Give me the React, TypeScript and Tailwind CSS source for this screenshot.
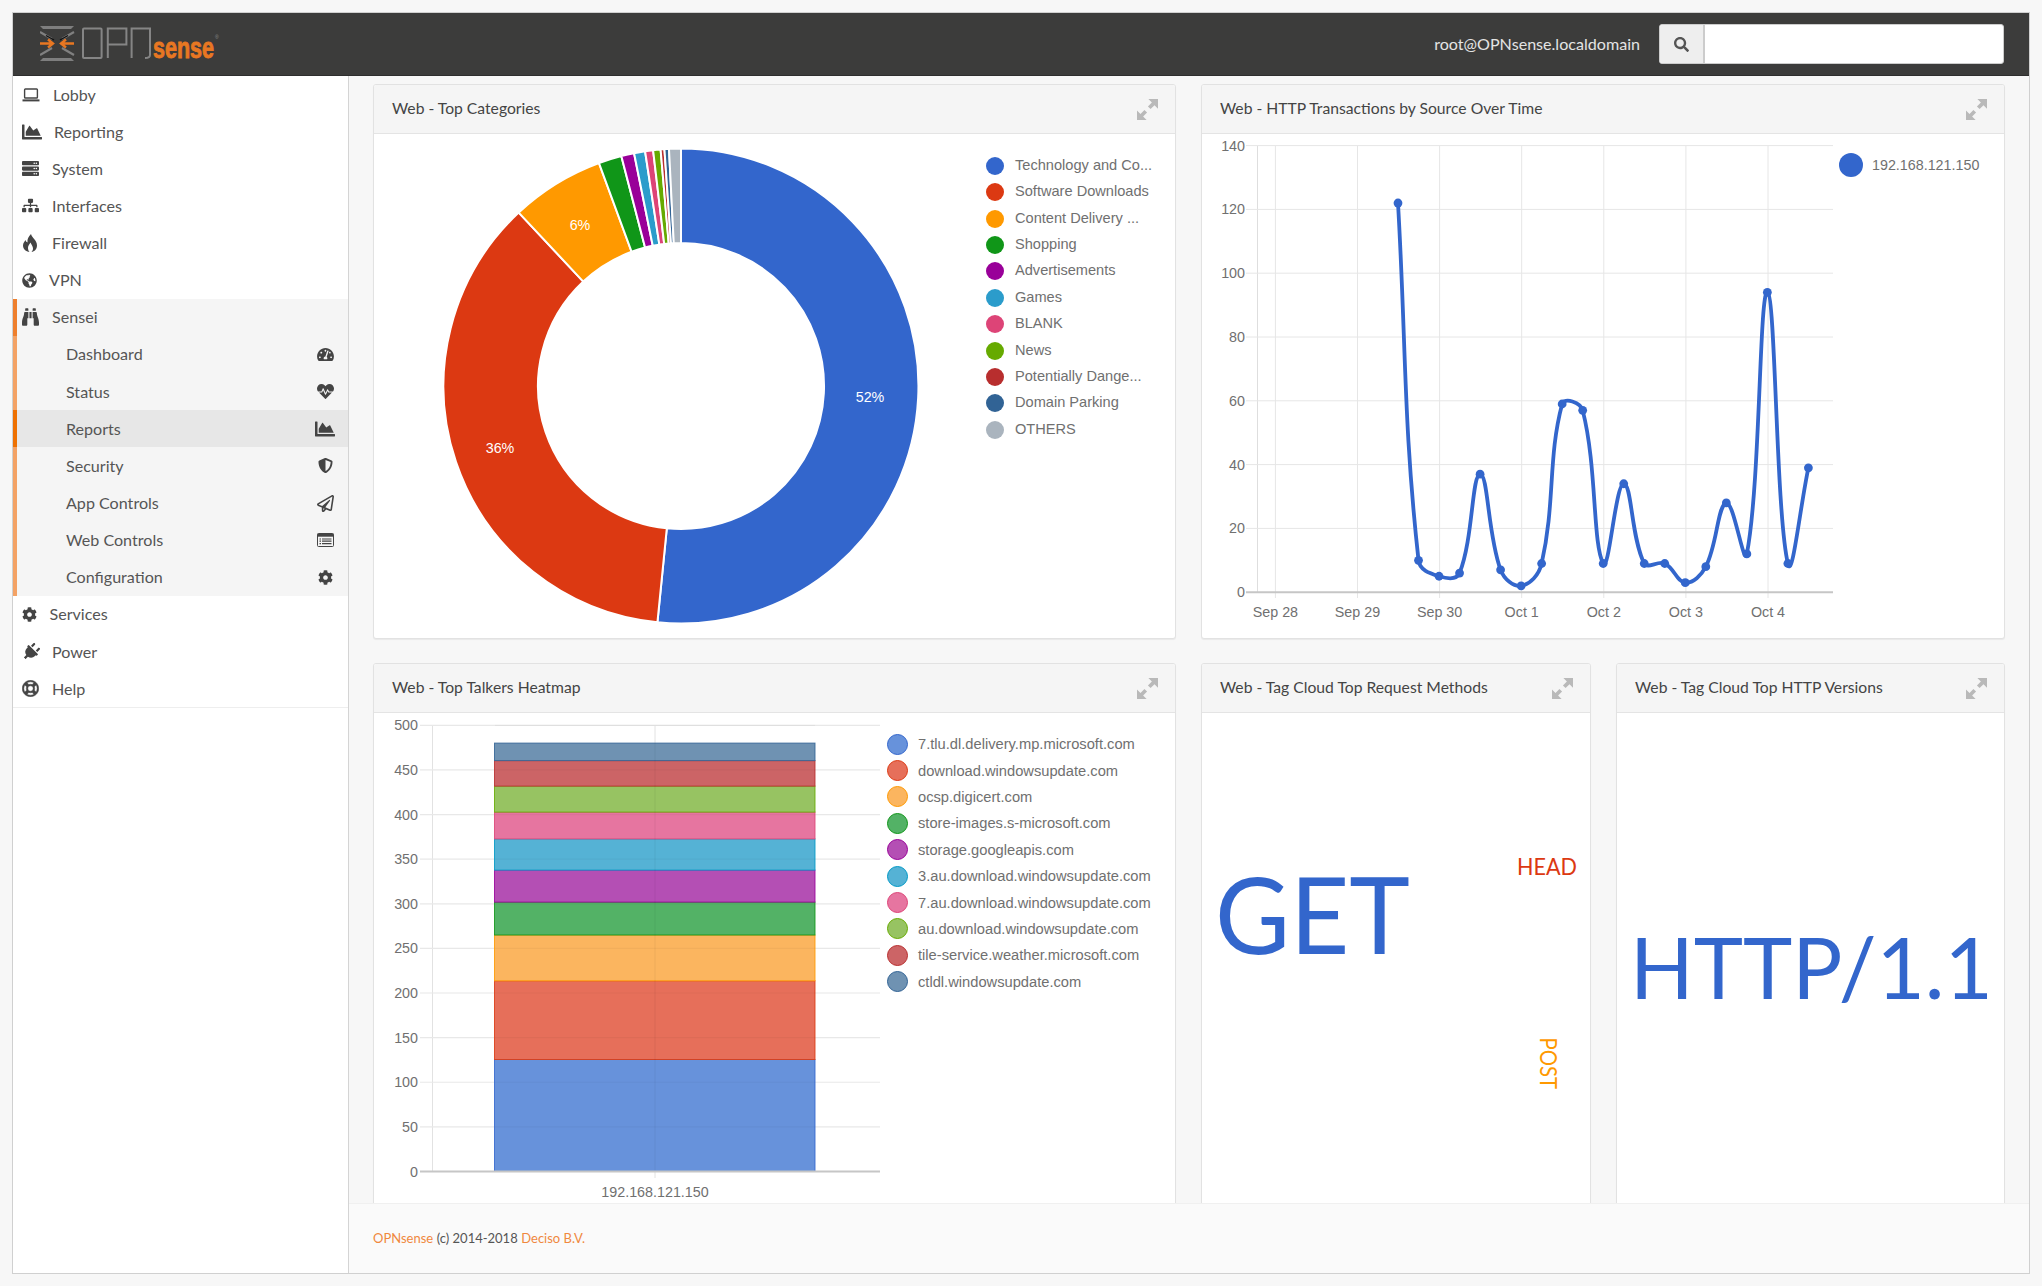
import React from "react";
import {
  FaBinoculars, FaChartArea, FaCog, FaGlobeAmericas, FaHeartbeat, FaPlug, FaRegLifeRing,
  FaRegPaperPlane, FaSearch, FaServer, FaShieldAlt, FaSitemap, FaTachometerAlt,
} from "react-icons/fa";

const SANS = "font-['Lato','Noto_Sans',sans-serif]";

function LaptopIcon() {
  return (
    <svg viewBox="0 0 18 14" className="w-[18px] h-[14px]" fill="none" stroke="currentColor">
      <rect x="2.6" y="1" width="12.8" height="9" rx="0.8" strokeWidth="1.4" />
      <path d="M0.5 12.4H17.5" strokeWidth="2" />
    </svg>
  );
}
function ListIcon() {
  return (
    <svg viewBox="0 0 17 14" className="w-[17px] h-[14px]" fill="none" stroke="currentColor">
      <rect x="0.5" y="0.5" width="16" height="13" rx="1" strokeWidth="1" />
      <path d="M0.5 2.2H16.5" strokeWidth="3" />
      <path d="M2.5 6H4M5 6H14.5M2.5 8.2H4M5 8.2H14.5M2.5 10.6H4M5 10.6H14.5" strokeWidth="1.2" />
    </svg>
  );
}
function FlameIcon() {
  return (
    <svg viewBox="0 0 14 18" className="w-[14px] h-[18px] ml-[1px]" fill="currentColor">
      <path d="M8 0C9 4 14 6 14 11.5C14 15 11.5 17.5 8.5 18C10 16.5 10.5 14.5 9.5 12.5C9 11 8 10 7.5 8.5C6.5 10.5 5 11.5 5 14C5 15.5 5.5 17 6.5 18C3 17.5 0 15 0 11.5C0 9 1.5 7.5 2.5 6C3 7.5 3.5 8 4.5 8.5C4 5 5.5 2.5 8 0Z" />
    </svg>
  );
}

const TOP = [
  { label: "Lobby", icon: <LaptopIcon />, box: "w-[31px]" },
  { label: "Reporting", icon: <FaChartArea className="w-[20px] h-[20px]" />, box: "w-[32px]" },
  { label: "System", icon: <FaServer className="w-[17px] h-[17px]" />, box: "w-[30px]" },
  { label: "Interfaces", icon: <FaSitemap className="w-[17px] h-[15px]" />, box: "w-[30px]" },
  { label: "Firewall", icon: <FlameIcon />, box: "w-[30px]" },
  { label: "VPN", icon: <FaGlobeAmericas className="w-[15px] h-[15px]" />, box: "w-[27px]" },
];
const SUB = [
  { label: "Dashboard", icon: <FaTachometerAlt className="w-[17px] h-[15px]" /> },
  { label: "Status", icon: <FaHeartbeat className="w-[17px] h-[17px]" /> },
  { label: "Reports", icon: <FaChartArea className="w-[20px] h-[20px]" />, active: true },
  { label: "Security", icon: <FaShieldAlt className="w-[15px] h-[17px]" /> },
  { label: "App Controls", icon: <FaRegPaperPlane className="w-[17px] h-[17px]" /> },
  { label: "Web Controls", icon: <ListIcon /> },
  { label: "Configuration", icon: <FaCog className="w-[15px] h-[15px]" /> },
];
const BOTTOM = [
  { label: "Services", icon: <FaCog className="w-[15px] h-[15px]" />, box: "w-[27.5px]" },
  { label: "Power", icon: <FaPlug className="w-[18px] h-[18px] rotate-45" />, box: "w-[30px]" },
  { label: "Help", icon: <FaRegLifeRing className="w-[17px] h-[17px] stroke-[14px]" />, box: "w-[30px]" },
];

function Row({ label, icon, box }: { label: string; icon: React.ReactNode; box: string }) {
  return (
    <div className="h-[37.15px] flex items-center pl-[9px]">
      <span className={`${box} flex items-center text-[#444]`}>{icon}</span>
      <span>{label}</span>
    </div>
  );
}

function Sidebar() {
  return (
    <aside className="w-[336px] shrink-0 bg-white border-r border-[#d4d4d4] text-[16.1px] text-[#555]">
      <div className="border-b border-[#eeeeee]">
        {TOP.map((r) => <Row key={r.label} {...r} />)}
        <div className="h-[37.15px] flex items-center pl-[5px] bg-[#f5f5f5] border-l-[4px] border-[#ee7f2d]">
          <span className="w-[30px] flex items-center text-[#444]"><FaBinoculars className="w-[17px] h-[20px]" preserveAspectRatio="none" /></span>
          <span>Sensei</span>
        </div>
        {SUB.map((r) => (
          <div
            key={r.label}
            className={r.active
              ? "h-[37.15px] flex items-center justify-between bg-[#e7e7e7] border-l-[4px] border-[#ee7102] pl-[49px] pr-[13px]"
              : "h-[37.15px] flex items-center justify-between bg-[#f5f5f5] border-l-[4px] border-[#f3a265] pl-[49px] pr-[13px]"}
          >
            <span>{r.label}</span>
            <span className="w-[20px] flex justify-center text-[#444]">{r.icon}</span>
          </div>
        ))}
        {BOTTOM.map((r) => <Row key={r.label} {...r} />)}
      </div>
    </aside>
  );
}

function ExpandIcon() {
  return (
    <svg viewBox="0 0 24 24" className="w-[21px] h-[21px]" fill="#b9b9b9">
      <path d="M13 0H24V11L20 7L15.5 11.5L12.5 8.5L17 4Z" />
      <path d="M11 24H0V13L4 17L8.5 12.5L11.5 15.5L7 20Z" />
    </svg>
  );
}

function Card({ title, width, height, children }: { title: string; width: string; height: string; children: React.ReactNode }) {
  return (
    <section className={`${width} ${height} shrink-0 bg-white border border-[#e2e2e2] rounded-[3px] shadow-[0_1px_1px_rgba(0,0,0,0.06)] flex flex-col overflow-hidden`}>
      <header className="h-[49px] shrink-0 bg-[#f5f5f5] border-b border-[#e4e4e4] flex items-center justify-between pl-[18px] pr-[17px]">
        <h2 className="text-[15.7px] font-normal text-[#444]">{title}</h2>
        <ExpandIcon />
      </header>
      {children}
    </section>
  );
}

const C = ["#3366cc", "#dc3912", "#ff9900", "#109618", "#990099", "#2b9ccb", "#dd4477", "#66aa00", "#b82e2e", "#316395", "#aab4be"];

function arc(cx: number, cy: number, R: number, r: number, a0: number, a1: number) {
  const p = (rad: number, a: number) => {
    const t = ((a - 90) * Math.PI) / 180;
    return `${(cx + rad * Math.cos(t)).toFixed(2)} ${(cy + rad * Math.sin(t)).toFixed(2)}`;
  };
  const large = a1 - a0 > 180 ? 1 : 0;
  return `M${p(R, a0)}A${R} ${R} 0 ${large} 1 ${p(R, a1)}L${p(r, a1)}A${r} ${r} 0 ${large} 0 ${p(r, a0)}Z`;
}

function Donut() {
  const stops = [0, 185.7, 316.9, 339.8, 345.45, 348.6, 351.3, 353.25, 355.07, 356, 357.1, 360];
  return (
    <svg viewBox="374 134 610 504" className="w-[610px] h-[504px] shrink-0">
      {C.map((c, i) => (
        <path key={c} d={arc(681, 386, 237.5, 143, stops[i], stops[i + 1])} fill={c} stroke="#fff" strokeWidth="2" />
      ))}
      <g fill="#fff" fontSize="14.3" textAnchor="middle" fontFamily="'Liberation Sans',sans-serif">
        <text x="870" y="401.5">52%</text>
        <text x="500" y="453">36%</text>
        <text x="580" y="230">6%</text>
      </g>
    </svg>
  );
}

const CAT = ["Technology and Co...", "Software Downloads", "Content Delivery ...", "Shopping", "Advertisements", "Games", "BLANK", "News", "Potentially Dange...", "Domain Parking", "OTHERS"];

function CatLegend() {
  return (
    <div className="pt-[18.6px] pl-[2px] flex flex-col font-['Liberation_Sans',sans-serif] text-[14.6px] text-[#707070]">
      {CAT.map((t, i) => (
        <div key={t} className="h-[26.4px] flex items-center gap-[11px]">
          <span className="w-[18px] h-[18px] rounded-full" style={{ background: C[i] }} />
          <span>{t}</span>
        </div>
      ))}
    </div>
  );
}

const LINE = [122, 10, 5, 6, 37, 7, 2, 9, 59, 57, 9, 34, 9, 9, 3, 8, 28, 12, 94, 9, 39];

function linePath(pts: [number, number][]) {
  const t = 0.4;
  const ctrl = pts.map((p, i) => {
    const a = pts[i - 1] ?? p;
    const b = pts[i + 1] ?? p;
    const d01 = Math.hypot(p[0] - a[0], p[1] - a[1]);
    const d12 = Math.hypot(b[0] - p[0], b[1] - p[1]);
    const s = d01 + d12 || 1;
    const fa = (t * d01) / s;
    const fb = (t * d12) / s;
    return {
      prev: [p[0] - fa * (b[0] - a[0]), p[1] - fa * (b[1] - a[1])],
      next: [p[0] + fb * (b[0] - a[0]), p[1] + fb * (b[1] - a[1])],
    };
  });
  let d = `M${pts[0][0]} ${pts[0][1]}`;
  for (let i = 1; i < pts.length; i++) {
    d += `C${ctrl[i - 1].next[0]} ${ctrl[i - 1].next[1]} ${ctrl[i].prev[0]} ${ctrl[i].prev[1]} ${pts[i][0]} ${pts[i][1]}`;
  }
  return d;
}

function LineChart() {
  const y = (v: number) => 592.2 - v * 3.19;
  const pts = LINE.map((v, i) => [1398 + i * 20.52, y(v)] as [number, number]);
  const days = ["Sep 28", "Sep 29", "Sep 30", "Oct 1", "Oct 2", "Oct 3", "Oct 4"];
  return (
    <svg viewBox="1202 134 633 504" className="w-[633px] h-[504px] shrink-0" fontFamily="'Liberation Sans',sans-serif">
      <path d="M1257.5 146V593" stroke="#dedede" strokeWidth="1" />
      {days.map((d, i) => {
        const x = 1275.4 + i * 82.1;
        return (
          <g key={d}>
            <path d={`M${x} 146V598`} stroke="#e6e6e6" strokeWidth="1" />
            <text x={x} y="617" textAnchor="middle" fontSize="14.3" fill="#707070">{d}</text>
          </g>
        );
      })}
      {[0, 20, 40, 60, 80, 100, 120, 140].map((v) => (
        <g key={v}>
          {v > 0 && <path d={`M1246 ${y(v)}H1833`} stroke="#e6e6e6" strokeWidth="1" />}
          <text x="1245" y={y(v) + 5} textAnchor="end" fontSize="14.3" fill="#707070">{v}</text>
        </g>
      ))}
      <path d={`M1246 ${y(0)}H1833`} stroke="#c6c6c6" strokeWidth="2" />
      <path d={linePath(pts)} fill="none" stroke="#3366cc" strokeWidth="3.8" />
      {pts.map((p, i) => <circle key={i} cx={p[0]} cy={p[1]} r="4.4" fill="#3366cc" />)}
    </svg>
  );
}

const BOUNDS = [1172.5, 1060.5, 981.8, 936, 903.1, 871.1, 839.9, 813.1, 787.1, 761.6, 744.1];
const STACK = ["#3366cc", "#dc3912", "#ff9900", "#109618", "#990099", "#0099c6", "#dd4477", "#66aa00", "#b82e2e", "#316395"];
const FILL = ["#6792db", "#e66f5a", "#fbb55f", "#53b266", "#b44fb4", "#55b2d5", "#e675a0", "#97c362", "#cc6466", "#6f92b2"];
const HOSTS = ["7.tlu.dl.delivery.mp.microsoft.com", "download.windowsupdate.com", "ocsp.digicert.com", "store-images.s-microsoft.com", "storage.googleapis.com", "3.au.download.windowsupdate.com", "7.au.download.windowsupdate.com", "au.download.windowsupdate.com", "tile-service.weather.microsoft.com", "ctldl.windowsupdate.com"];

function BarChart() {
  const y = (v: number) => 1172.5 - v * 0.8924;
  const ticks = [50, 100, 150, 200, 250, 300, 350, 400, 450, 500];
  return (
    <svg viewBox="374 714 506 489" className="w-[506px] h-[489px] shrink-0" fontFamily="'Liberation Sans',sans-serif">
      <path d="M432.5 726V1173" stroke="#e2e2e2" />
      <path d="M655 726V1179" stroke="#e2e2e2" />
      {ticks.map((v) => (
        <path key={v} d={`M420 ${y(v)}H880`} stroke="#e8e8e8" strokeWidth="1.2" />
      ))}
      {STACK.map((c, i) => (
        <rect key={c} x="494.5" y={BOUNDS[i + 1]} width="320.5" height={BOUNDS[i] - BOUNDS[i + 1]} fill={FILL[i]} stroke={c} strokeOpacity="0.85" strokeWidth="1" />
      ))}
      <path d="M655 744V1172" stroke="#000" strokeOpacity="0.06" />
      {ticks.map((v) => (
        <path key={v} d={`M495 ${y(v)}H815`} stroke="#000" strokeOpacity="0.035" strokeWidth="1.2" />
      ))}
      <path d={`M420 ${y(0)}H880`} stroke="#c6c6c6" strokeWidth="2" />
      {[0, ...ticks].map((v) => (
        <text key={v} x="418" y={y(v) + 5} textAnchor="end" fontSize="14.3" fill="#707070">{v}</text>
      ))}
      <text x="655" y="1198" textAnchor="middle" fontSize="14.3" fill="#707070">192.168.121.150</text>
    </svg>
  );
}

function HostLegend() {
  return (
    <div className="pt-[18px] pl-[7px] flex flex-col font-['Liberation_Sans',sans-serif] text-[14.7px] text-[#707070]">
      {HOSTS.map((t, i) => (
        <div key={t} className="h-[26.4px] flex items-center gap-[10px] whitespace-nowrap">
          <span className="w-[21px] h-[21px] shrink-0 rounded-full border" style={{ background: FILL[i], borderColor: STACK[i] }} />
          <span>{t}</span>
        </div>
      ))}
    </div>
  );
}

function TagMethods() {
  return (
    <svg viewBox="1202 714 387 500" className="w-[387px] h-[500px]" fontFamily="'Lato',sans-serif">
      <text x="1215" y="955" fontSize="106" fill="#3366cc" textLength="195" lengthAdjust="spacingAndGlyphs">GET</text>
      <text x="1517" y="875.5" fontSize="24" fill="#dc3912" textLength="60" lengthAdjust="spacingAndGlyphs">HEAD</text>
      <text transform="translate(1539.5 1038.5) rotate(90)" fontSize="24" fill="#ff9900" textLength="51.5" lengthAdjust="spacingAndGlyphs">POST</text>
    </svg>
  );
}
function TagVersions() {
  return (
    <svg viewBox="1616 714 387 500" className="w-[387px] h-[500px]" fontFamily="'Lato',sans-serif">
      <text x="1629" y="999.7" fontSize="85" fill="#3366cc" textLength="363" lengthAdjust="spacingAndGlyphs">HTTP/1.1</text>
    </svg>
  );
}

function Logo() {
  return (
    <svg viewBox="0 0 200 40" className="w-[200px] h-[40px]">
      <g fill="#7e7e7e">
        <path d="M0 2H34L31 5H3Z" />
        <path d="M3 34H31L34 37H0Z" />
      </g>
      <g fill="none" strokeWidth="2.2">
        <path d="M0 8L12 15M34 8L22 15M0 31L12 24M34 31L22 24" stroke="#808080" />
        <path d="M6 11.5L14 16M28 11.5L20 16" stroke="#111" strokeWidth="1.4" />
        <path d="M0 19.5H12M8 15.5L13 19.5L8 23.5M34 19.5H22M26 15.5L21 19.5L26 23.5" stroke="#e87722" strokeWidth="2.4" />
      </g>
      <g fill="none" stroke="#858585" strokeWidth="2">
        <rect x="43" y="4.5" width="18.6" height="29.5" rx="1" />
        <path d="M67.8 34V4.5H86.4V20.5H67.8" />
        <path d="M91.6 34V4.5H110V31Q110 34 105 34" />
      </g>
      <text x="113" y="34" fontFamily="'Liberation Sans',sans-serif" fontWeight="700" fontSize="30" fill="#e87722" stroke="#e87722" strokeWidth="0.9" textLength="61" lengthAdjust="spacingAndGlyphs">sense</text>
      <text x="175" y="15" fontFamily="'Liberation Sans',sans-serif" fontSize="5" fill="#8a8a8a">®</text>
    </svg>
  );
}

export default function App() {
  return (
    <div className={`w-[2042px] h-[1286px] bg-[#f7f7f7] p-[12px] overflow-hidden ${SANS}`}>
      <div className="h-full border border-[#d0d0d0] flex flex-col">
        <header className="h-[63px] shrink-0 bg-[#3c3c3b] border-b border-[#2e2e2e] flex items-center pl-[27px] pr-[25px]">
          <Logo />
          <span className="ml-auto text-[16.1px] text-[#e4e4e4]">root@OPNsense.localdomain</span>
          <div className="ml-[19px] w-[345px] h-[40px] flex rounded-[3px] border border-[#cccccc] overflow-hidden bg-white">
            <span className="w-[45px] bg-[#eeeeee] border-r-2 border-[#cccccc] flex items-center justify-center text-[#555]">
              <FaSearch className="w-[15px] h-[15px]" />
            </span>
          </div>
        </header>
        <div className="flex-1 min-h-0 flex">
          <Sidebar />
          <main className="flex-1 min-w-0 flex flex-col bg-[#f7f7f7]">
            <div className="flex-1 min-h-0 overflow-hidden pt-[8px] pl-[24px] flex flex-col gap-[24px]">
              <div className="flex gap-[25px]">
                <Card title="Web - Top Categories" width="w-[803px]" height="h-[555px]">
                  <div className="flex"><Donut /><CatLegend /></div>
                </Card>
                <Card title="Web - HTTP Transactions by Source Over Time" width="w-[804px]" height="h-[555px]">
                  <div className="flex">
                    <LineChart />
                    <div className="pt-[19px] pl-[4px] flex items-start gap-[9px] font-['Liberation_Sans',sans-serif] text-[14.3px] text-[#707070] whitespace-nowrap">
                      <span className="w-[24px] h-[24px] rounded-full bg-[#3366cc] shrink-0" />
                      <span className="leading-[24px]">192.168.121.150</span>
                    </div>
                  </div>
                </Card>
              </div>
              <div className="flex gap-[25px]">
                <Card title="Web - Top Talkers Heatmap" width="w-[803px]" height="h-[560px]">
                  <div className="flex"><BarChart /><HostLegend /></div>
                </Card>
                <div className="flex gap-[25px]">
                  <Card title="Web - Tag Cloud Top Request Methods" width="w-[390px]" height="h-[560px]"><TagMethods /></Card>
                  <Card title="Web - Tag Cloud Top HTTP Versions" width="w-[389px]" height="h-[560px]"><TagVersions /></Card>
                </div>
              </div>
            </div>
            <footer className="h-[70px] shrink-0 bg-[#fafafa] border-t border-[#f0f0f0] flex items-center pl-[24px] text-[13px] text-[#555]">
              <span className="text-[#f0883e]">OPNsense</span>
              <span className="mx-[3.5px]">(c) 2014-2018</span>
              <span className="text-[#f0883e]">Deciso B.V.</span>
            </footer>
          </main>
        </div>
      </div>
    </div>
  );
}
